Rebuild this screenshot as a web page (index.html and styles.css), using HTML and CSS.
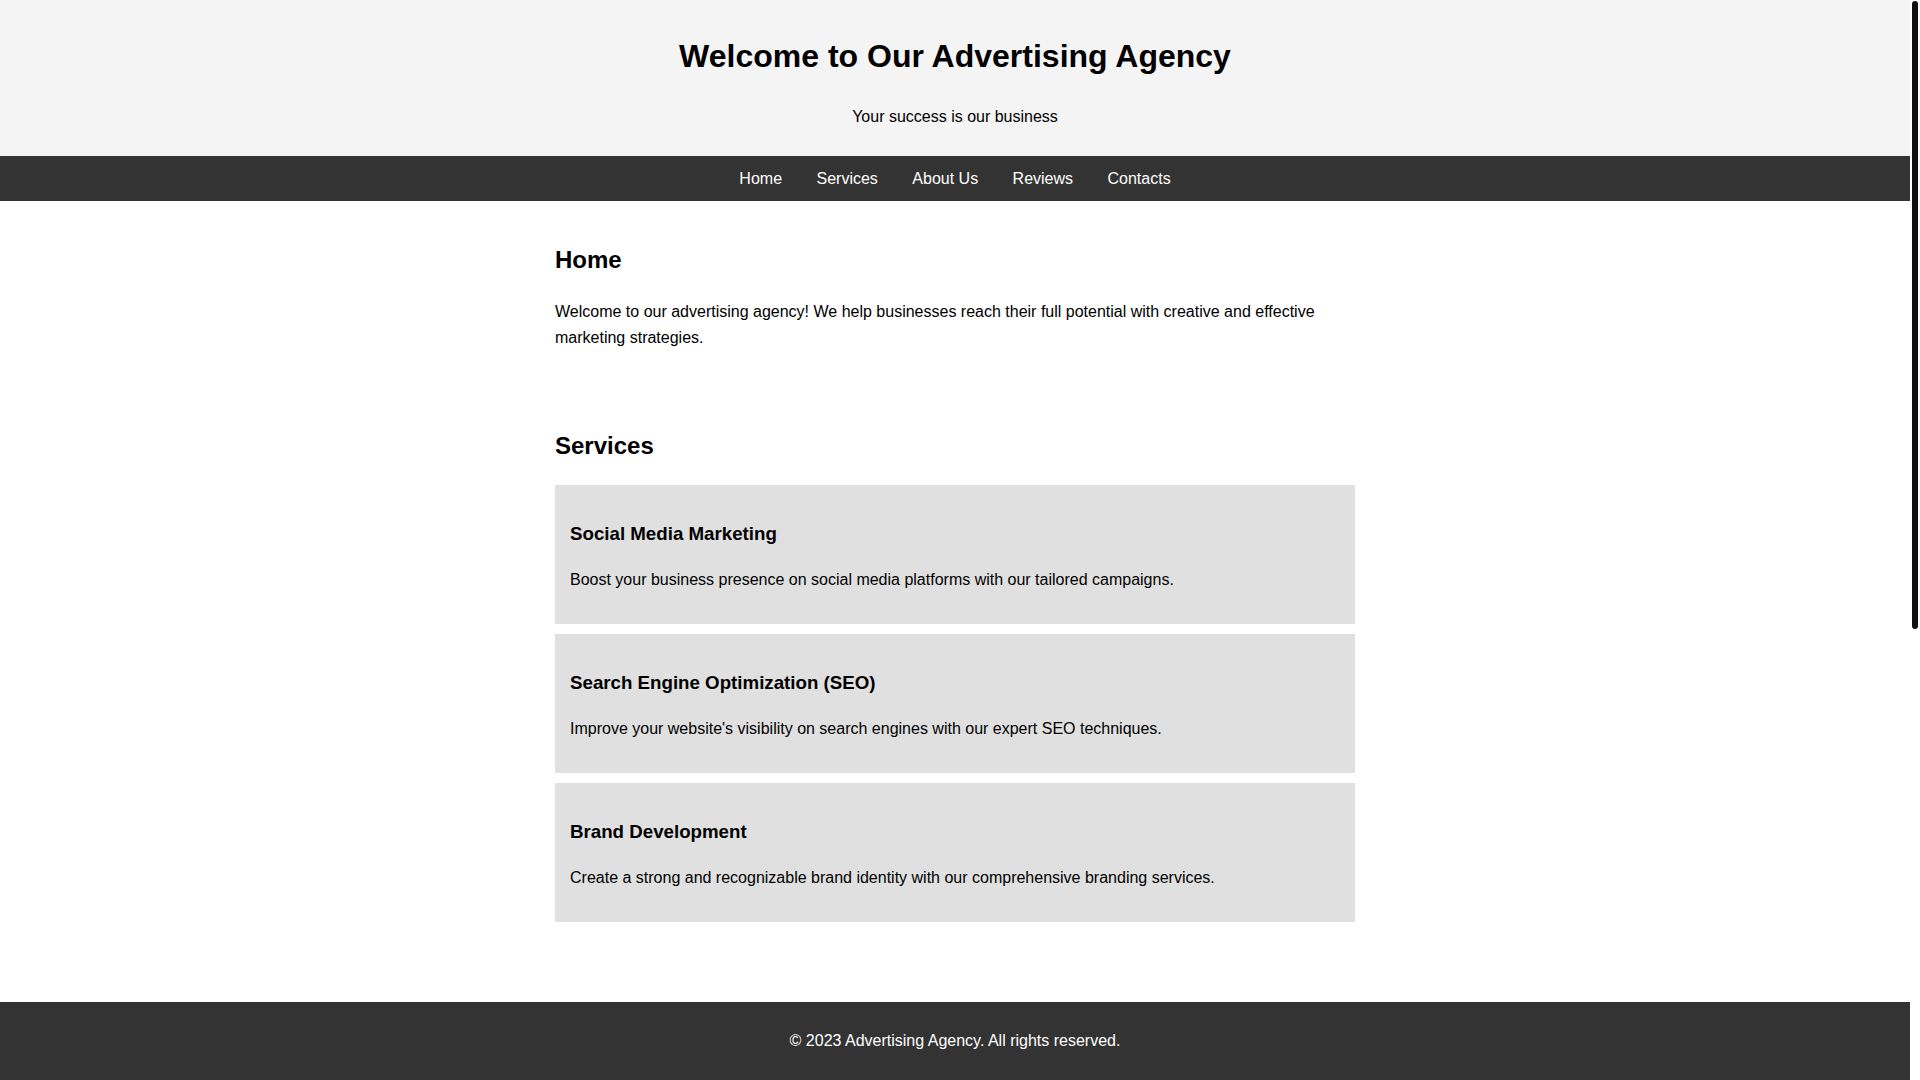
FILE: index.html
```html
<!DOCTYPE html>
<html lang="en">
<head>
<meta charset="UTF-8">
<title>Advertising Agency</title>
<link rel="stylesheet" href="styles.css">
</head>
<body>
<header class="site-header">
  <h1>Welcome to Our Advertising Agency</h1>
  <p>Your success is our business</p>
</header>
<nav class="site-nav">
  <a href="#home">Home</a>
  <a href="#services">Services</a>
  <a href="#about">About Us</a>
  <a href="#reviews">Reviews</a>
  <a href="#contacts">Contacts</a>
</nav>
<main class="content">
  <section id="home" class="section">
    <h2>Home</h2>
    <p>Welcome to our advertising agency! We help businesses reach their full potential with creative and effective marketing strategies.</p>
  </section>
  <section id="services" class="section">
    <h2>Services</h2>
    <div class="card">
      <h3>Social Media Marketing</h3>
      <p>Boost your business presence on social media platforms with our tailored campaigns.</p>
    </div>
    <div class="card">
      <h3>Search Engine Optimization (SEO)</h3>
      <p>Improve your website's visibility on search engines with our expert SEO techniques.</p>
    </div>
    <div class="card">
      <h3>Brand Development</h3>
      <p>Create a strong and recognizable brand identity with our comprehensive branding services.</p>
    </div>
  </section>
  <section id="about" class="section section-below">
    <h2>About Us</h2>
    <p>We are a team of passionate marketers, designers and strategists dedicated to helping brands grow and connect with their audiences.</p>
  </section>
  <section id="reviews" class="section">
    <h2>Reviews</h2>
    <div class="card">
      <h3>John Smith</h3>
      <p>"The team did an amazing job with our social media campaign. Highly recommended!"</p>
    </div>
    <div class="card">
      <h3>Emily Johnson</h3>
      <p>"Our website traffic doubled thanks to their SEO expertise."</p>
    </div>
    <div class="card">
      <h3>Michael Brown</h3>
      <p>"They helped us build a brand that our customers love."</p>
    </div>
  </section>
  <section id="contacts" class="section">
    <h2>Contacts</h2>
    <p>Email: info@advertisingagency.com</p>
    <p>Phone: +1 (555) 123-4567</p>
    <p>Address: 123 Main Street, City, Country</p>
  </section>
</main>
<footer class="site-footer">
  <p>&copy; 2023 Advertising Agency. All rights reserved.</p>
</footer>
<div class="scroll-thumb" aria-hidden="true"></div>
</body>
</html>
```
FILE: styles.css
```css
html, body {
  margin: 0;
  padding: 0;
}
body {
  margin-right: 10px;
  font-family: "Liberation Sans", Arial, sans-serif;
  font-size: 16px;
  line-height: 1.6;
  color: #000;
  background: #fff;
}
.site-header {
  background: #f4f4f4;
  padding: 10px;
  text-align: center;
}
.site-header h1 {
  font-size: 32px;
  margin: 21.44px 0;
}
.site-header p {
  margin: 16px 0;
}
.site-nav {
  background: #333;
  padding: 10px;
  text-align: center;
}
.site-nav a {
  color: #fff;
  text-decoration: none;
  margin: 0 15px;
}
.content {
  max-width: 800px;
  margin: 0 auto;
}
.section {
  padding: 20px 0;
}
.section-below {
  padding-top: 40px;
}
.section h2 {
  font-size: 24px;
  margin: 19.92px 0;
}
.section p {
  margin: 16px 0;
}
.card {
  background: #e0e0e0;
  padding: 15px;
  margin-bottom: 10px;
}
.card h3 {
  font-size: 18.72px;
  margin: 18.72px 0;
}
.site-footer {
  position: fixed;
  left: 0;
  right: 10px;
  bottom: 0;
  background: #333;
  color: #fff;
  text-align: center;
  padding: 10px;
}
.site-footer p {
  margin: 16px 0;
}
.scroll-thumb {
  position: fixed;
  top: 1px;
  right: 2px;
  width: 6px;
  height: 628px;
  background: #111;
  border-radius: 3px;
}
```
